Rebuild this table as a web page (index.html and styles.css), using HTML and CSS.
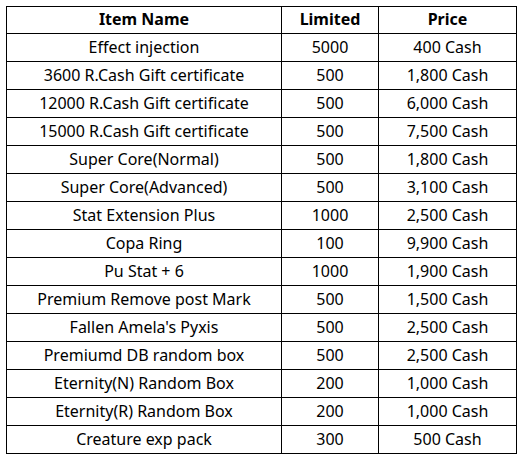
FILE: index.html
```html
<!DOCTYPE html>
<html>
<head>
<meta charset="utf-8">
<link rel="stylesheet" href="styles.css">
</head>
<body>
<table class="price-table">
  <colgroup>
    <col class="col-name">
    <col class="col-limit">
    <col class="col-price">
  </colgroup>
  <thead>
    <tr class="head-row"><th>Item Name</th><th>Limited</th><th>Price</th></tr>
  </thead>
  <tbody>
    <tr><td>Effect injection</td><td>5000</td><td>400 Cash</td></tr>
    <tr><td>3600 R.Cash Gift certificate</td><td>500</td><td>1,800 Cash</td></tr>
    <tr><td>12000 R.Cash Gift certificate</td><td>500</td><td>6,000 Cash</td></tr>
    <tr><td>15000 R.Cash Gift certificate</td><td>500</td><td>7,500 Cash</td></tr>
    <tr><td>Super Core(Normal)</td><td>500</td><td>1,800 Cash</td></tr>
    <tr><td>Super Core(Advanced)</td><td>500</td><td>3,100 Cash</td></tr>
    <tr><td>Stat Extension Plus</td><td>1000</td><td>2,500 Cash</td></tr>
    <tr><td>Copa Ring</td><td>100</td><td>9,900 Cash</td></tr>
    <tr><td>Pu Stat + 6</td><td>1000</td><td>1,900 Cash</td></tr>
    <tr><td>Premium Remove post Mark</td><td>500</td><td>1,500 Cash</td></tr>
    <tr><td>Fallen Amela's Pyxis</td><td>500</td><td>2,500 Cash</td></tr>
    <tr><td>Premiumd DB random box</td><td>500</td><td>2,500 Cash</td></tr>
    <tr><td>Eternity(N) Random Box</td><td>200</td><td>1,000 Cash</td></tr>
    <tr><td>Eternity(R) Random Box</td><td>200</td><td>1,000 Cash</td></tr>
    <tr><td>Creature exp pack</td><td>300</td><td>500 Cash</td></tr>
  </tbody>
</table>
</body>
</html>
```
FILE: styles.css
```css
html, body {
  margin: 0;
  padding: 0;
  background: #fff;
}
body {
  padding: 6px;
  font-family: "Noto Sans", "Noto Sans CJK KR", sans-serif;
  font-size: 16px;
  color: #000;
}
.price-table {
  border-collapse: collapse;
  table-layout: fixed;
  width: 510px;
}
.col-name { width: 275px; }
.col-limit { width: 97px; }
.col-price { width: 138px; }
.price-table th,
.price-table td {
  border: 1px solid #000;
  padding: 0 0 2px;
  height: 25px;
  text-align: center;
  vertical-align: middle;
  line-height: 20px;
  white-space: nowrap;
}
.price-table th {
  font-weight: bold;
  height: 24px;
}
```
